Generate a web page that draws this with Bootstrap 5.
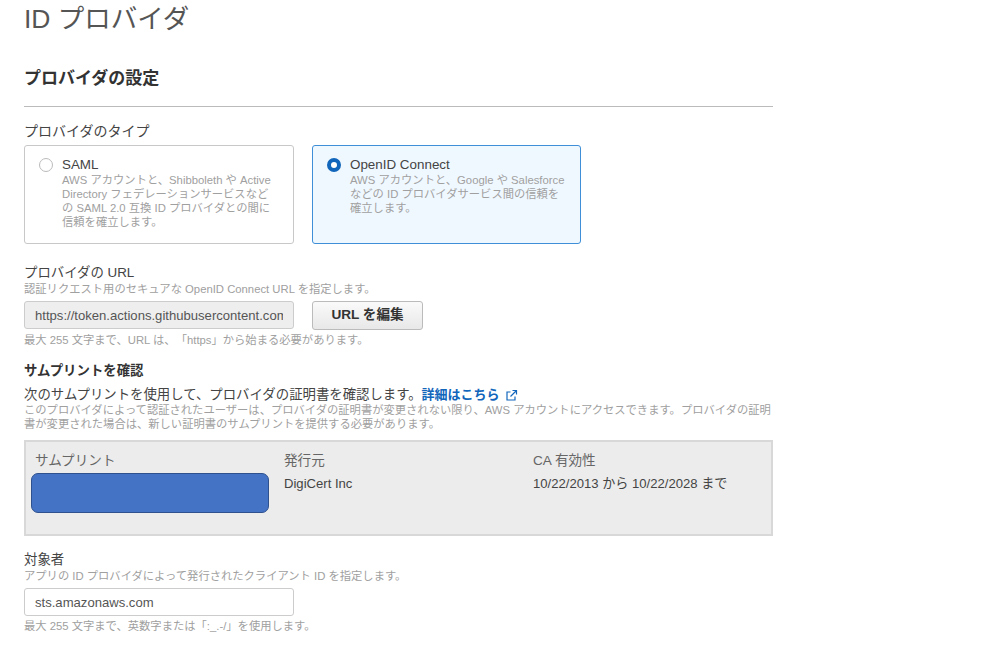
<!DOCTYPE html>
<html lang="ja">
<head>
  <meta charset="UTF-8">
  <title>ID プロバイダ</title>
  <link href="https://cdn.jsdelivr.net/npm/bootstrap@5.3.3/dist/css/bootstrap.min.css" rel="stylesheet">
  <style>
    body {
      font-family: "Liberation Sans", "Noto Sans CJK JP", sans-serif;
      color: #444;
      font-size: 12px;
      background: #fff;
      text-spacing-trim: space-all;
    }
    .pagina { width: 773px; padding-left: 24px; }
    .titol { font-size: 26.5px; font-weight: 400; line-height: 36px; margin: 1px 0 0; color: #555; }
    .seccio { font-size: 17px; font-weight: 700; line-height: 24px; margin: 30px 0 0; color: #333; }
    .linia { margin: 15px 0 15px; border: 0; border-top: 1px solid #bbb; opacity: 1; }
    .etiqueta { font-size: 13.4px; line-height: 18px; color: #444; }
    .etiqueta.ample { font-size: 14px; }
    .ajuda { font-size: 11.3px; line-height: 14px; color: #a0a0a0; }
    .files-tipus { column-gap: 18px; margin-top: 5px; }
    .tipus {
      width: 270px;
      height: 99px;
      padding: 10px 22px 0 14px;
      border: 1px solid #c8c8c8;
      border-radius: 3px;
      gap: 9px;
    }
    .tipus.actiu { width: 269px; padding-right: 14px; background: #f0f8ff; border-color: #3f8fd8; }
    .tipus-nom { font-size: 13.4px; line-height: 17px; color: #444; }
    .radiet {
      width: 14px; height: 14px; margin-top: 2px; flex: none;
      border: 1px solid #bbb; border-radius: 50%; background: #fff;
    }
    .radiet.marcat { border: 4px solid #1166bb; }
    .files-url { column-gap: 18px; margin-top: 5px; }
    .url-camp {
      width: 270px; height: 28px; font-size: 13.1px; padding: 0 10px; border-radius: 3px;
      border-color: #ccc; color: #555; font-family: inherit;
    }
    .url-camp:disabled { background: #eee; }
    .boto-edita {
      width: 111px; height: 29px; padding: 0; font-size: 13.6px; font-weight: 700; color: #333;
      background: linear-gradient(#fafafa, #e8e8e8); border: 1px solid #bbb; border-radius: 3px;
    }
    .enllac { color: #1166bb; font-size: 13px; font-weight: 700; text-decoration: none; margin-left: -4px; }
    .icona-enllac { margin-left: 2px; }
    .subtitol { font-size: 13.4px; font-weight: 700; line-height: 18px; color: #333; margin-top: 15px; }
    .frase { font-size: 13.4px; line-height: 16px; color: #444; margin-top: 7px; }
    .caixa {
      width: 749px; height: 96px; background: #ececec; border: 2px solid #d8d8d8;
      margin-top: 9px; padding: 10px 5px 0;
    }
    .columna { width: 249px; flex: none; }
    .cap { font-size: 13.6px; line-height: 18px; color: #666; padding-left: 4px; }
    .valor { font-size: 13.1px; line-height: 18px; color: #444; padding-left: 4px; margin-top: 5px; }
    .tapat {
      width: 238px; height: 40px; background: #4472c4; border: 1px solid #2f528f; border-radius: 7px;
      margin-top: 3px;
    }
    .separa-url { margin-top: 20px; }
    .separa-petit { margin-top: 3px; }
    .separa-obj { margin-top: 15px; }
    .camp-blanc { background: #fff; margin-top: 5px; }
  </style>
</head>
<body>
  <div class="pagina">
    <h1 class="titol">ID プロバイダ</h1>
    <h2 class="seccio">プロバイダの設定</h2>
    <hr class="linia">

    <div class="etiqueta ample">プロバイダのタイプ</div>
    <div class="d-flex files-tipus">
      <div class="tipus d-flex">
        <span class="radiet"></span>
        <div>
          <div class="tipus-nom">SAML</div>
          <div class="ajuda">AWS アカウントと、Shibboleth や Active Directory フェデレーションサービスなどの SAML 2.0 互換 ID プロバイダとの間に信頼を確立します。</div>
        </div>
      </div>
      <div class="tipus actiu d-flex">
        <span class="radiet marcat"></span>
        <div>
          <div class="tipus-nom">OpenID Connect</div>
          <div class="ajuda">AWS アカウントと、Google や Salesforce などの ID プロバイダサービス間の信頼を確立します。</div>
        </div>
      </div>
    </div>

    <div class="etiqueta separa-url">プロバイダの URL</div>
    <div class="ajuda">認証リクエスト用のセキュアな OpenID Connect URL を指定します。</div>
    <div class="d-flex files-url">
      <input class="form-control url-camp" type="text" disabled value="https://token.actions.githubusercontent.com">
      <button class="btn boto-edita" type="button">URL を編集</button>
    </div>
    <div class="ajuda separa-petit">最大 255 文字まで、URL は、「https」から始まる必要があります。</div>

    <div class="subtitol">サムプリントを確認</div>
    <div class="frase">次のサムプリントを使用して、プロバイダの証明書を確認します。 <a class="enllac" href="#">詳細はこちら</a>
      <svg class="icona-enllac" width="13" height="13" viewBox="0 0 13 13" fill="none" stroke="#1166bb" stroke-width="1.2"><path d="M10 7.5V11H2V3h3.5"/><path d="M5.5 7.5 11.5 1.5M7.5 1.5h4v4"/></svg>
    </div>
    <div class="ajuda">このプロバイダによって認証されたユーザーは、プロバイダの証明書が変更されない限り、AWS アカウントにアクセスできます。プロバイダの証明書が変更された場合は、新しい証明書のサムプリントを提供する必要があります。</div>

    <div class="caixa d-flex">
      <div class="columna">
        <div class="cap">サムプリント</div>
        <div class="tapat"></div>
      </div>
      <div class="columna">
        <div class="cap">発行元</div>
        <div class="valor">DigiCert Inc</div>
      </div>
      <div class="columna">
        <div class="cap">CA 有効性</div>
        <div class="valor">10/22/2013 から 10/22/2028 まで</div>
      </div>
    </div>

    <div class="etiqueta separa-obj">対象者</div>
    <div class="ajuda">アプリの ID プロバイダによって発行されたクライアント ID を指定します。</div>
    <input class="form-control url-camp camp-blanc" type="text" value="sts.amazonaws.com">
    <div class="ajuda separa-petit">最大 255 文字まで、英数字または「:_.-/」を使用します。</div>
  </div>
  <script src="https://cdn.jsdelivr.net/npm/bootstrap@5.3.3/dist/js/bootstrap.bundle.min.js"></script>
</body>
</html>
